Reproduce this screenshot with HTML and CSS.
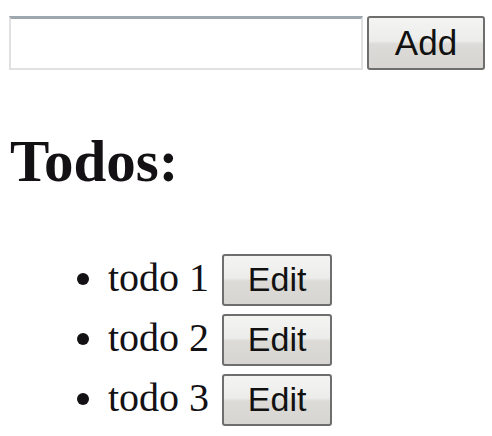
FILE: index.html
```html
<!DOCTYPE html>
<html lang="en">
<head>
  <meta charset="UTF-8" />
  <meta name="viewport" content="width=device-width, initial-scale=1.0" />
  <title>Todos</title>
  <link rel="stylesheet" href="styles.css">
</head>
<body>
  <form class="add-form" onsubmit="return false">
    <input class="todo-input" type="text" />
    <button class="btn add-button" type="submit">Add</button>
  </form>

  <h2 class="title">Todos:</h2>

  <ul class="todo-list">
    <li class="todo-item">todo 1 <button class="btn edit-button">Edit</button></li>
    <li class="todo-item">todo 2 <button class="btn edit-button">Edit</button></li>
    <li class="todo-item">todo 3 <button class="btn edit-button">Edit</button></li>
  </ul>
</body>
</html>
```

FILE: styles.css
```css
body {
  margin: 0;
  background: #fff;
  color: #141114;
  font-family: "Liberation Serif", "Times New Roman", serif;
}

.add-form {
  display: flex;
  gap: 4px;
  padding: 16px 0 0 9px;
  margin: 0;
}

.todo-input {
  box-sizing: border-box;
  width: 354px;
  height: 54px;
  margin: 0;
  border: 2px solid #dfe1e3;
  border-top: 3px solid #9ea6ae;
  background: #fff;
  outline: none;
}

.btn {
  box-sizing: border-box;
  margin: 0;
  padding: 0;
  border: 2px solid #6e6e6e;
  border-radius: 3px;
  background: linear-gradient(#f4f4f2 0%, #ececea 46%, #dcdbd7 52%, #d6d5d1 100%);
  color: #111;
  font-family: "Liberation Sans", Arial, sans-serif;
  cursor: pointer;
}

.add-button {
  width: 118px;
  height: 54px;
  font-size: 35px;
}

.title {
  margin: 60px 0 0 10px;
  font-size: 59px;
  line-height: 62px;
  font-weight: bold;
}

.todo-list {
  margin: 56px 0 0;
  padding-left: 108px;
}

.todo-item {
  font-size: 40px;
  line-height: 60px;
}

.edit-button {
  width: 110px;
  height: 52px;
  margin-left: 3px;
  font-size: 34px;
  vertical-align: baseline;
}
```
